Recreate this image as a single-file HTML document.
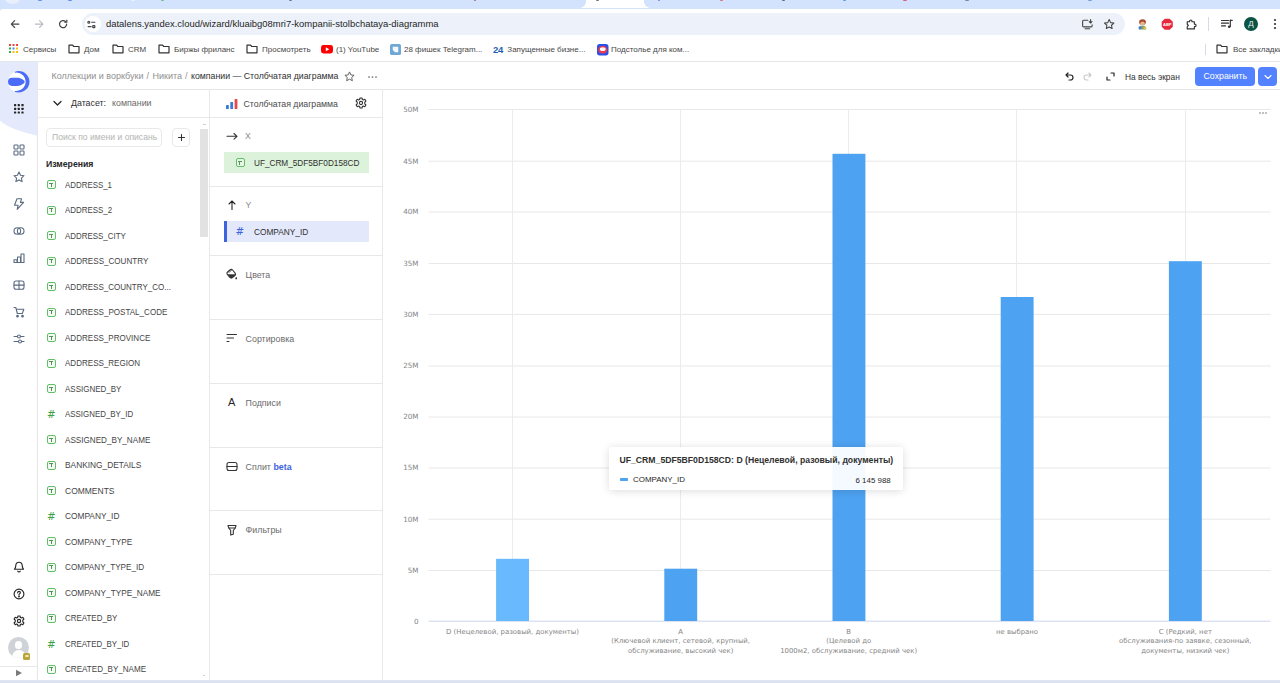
<!DOCTYPE html>
<html lang="ru">
<head>
<meta charset="utf-8">
<title>компании — Столбчатая диаграмма</title>
<style>
*{box-sizing:border-box;margin:0;padding:0}
html,body{width:1280px;height:683px;overflow:hidden;background:#fff}
body{font-family:"Liberation Sans",sans-serif;color:#262626;position:relative;font-size:8.7px;line-height:1}
.abs{position:absolute}
svg{display:block;overflow:visible}
/* browser chrome */
#tabs{left:0;top:0;width:1280px;height:14px;background:#d3e3fd}
#tabs .act{left:586px;top:0;width:58px;height:8px;background:#fff;border-radius:0}
#tabs .act:before,#tabs .act:after{content:"";position:absolute;bottom:0;width:6px;height:6px;background:radial-gradient(circle at 0 0,#d3e3fd 5.5px,#fff 6px)}
#tabs .act:before{left:-6px}
#tabs .act:after{right:-6px;background:radial-gradient(circle at 100% 0,#d3e3fd 5.5px,#fff 6px)}
#tb{left:0;top:8.500px;width:1280px;height:30.500px;background:#fff;border-radius:3px 0 0 0}
#pill{left:82px;top:13px;width:1043px;height:22px;border-radius:11px;background:#edf2fa}
#pill .ic{left:3px;top:3px;width:16px;height:16px;border-radius:8px;background:#fff}
#url{left:106px;top:13px;height:22px;line-height:22px;font-size:9.45px;color:#1f1f1f;white-space:nowrap}
#bm{left:0;top:39px;width:1280px;height:23px;background:#fff;border-bottom:1px solid #e4e6ea}
.bmi{top:39px;height:21px;line-height:21px;font-size:8px;color:#474747;white-space:nowrap}

/* app */
#aside{left:0;top:62px;width:38px;height:618px;background:#fff;border-right:1px solid #e6e6e6}
.ai{left:13px;width:12px;height:12px}
#hdr{left:38px;top:62px;width:1242px;height:28px;border-bottom:1px solid #e5e5e5;background:#fff}
.bc{top:62px;height:28px;line-height:28px;color:#8f8f8f;white-space:nowrap}
.vline{width:1px;background:#e8e8e8}
.hline{height:1px;background:#e8e8e8}
.t{white-space:nowrap;line-height:12px;height:12px}
.fld{left:64.800px;font-size:8.7px;color:#454545;transform:scaleX(.932);transform-origin:0 50%}
.ti{left:46.800px;width:9px;height:9px;border:1.100px solid #62bf66;border-radius:2px;background:#f4fbf4}
.ti:before{content:"";position:absolute;left:1.700px;top:1.600px;width:3.400px;height:1px;background:#5c8f60}
.ti:after{content:"";position:absolute;left:2.900px;top:2px;width:1px;height:3.400px;background:#5c8f60}
.hash{left:47px;font-family:"DejaVu Sans","Liberation Sans",sans-serif;font-size:10.300px;color:#3fa045;font-weight:400;line-height:12px;height:12px}
.sec{left:245.600px;font-size:8.850px;color:#6b6b6b}
.glab{font-family:"DejaVu Sans","Liberation Sans",sans-serif;font-size:7.200px;color:#858585;white-space:nowrap;line-height:10px;height:10px;text-align:right;width:30px;left:388.500px}
.xlab{font-family:"DejaVu Sans","Liberation Sans",sans-serif;font-size:6.920px;color:#858585;white-space:nowrap;line-height:9.700px;text-align:center;width:168px;top:627.500px}
.bar{background:#4da2f1;width:32.900px}
</style>
</head>
<body>
<!-- ===== browser chrome ===== -->
<div id="tabs" class="abs"><div class="act abs"></div></div>
<div id="tb" class="abs"></div>
<div class="abs" style="left:5px;top:-8px;width:15px;height:12px;background:#e9f0fc;border-radius:50%;z-index:2"></div><div class="abs" style="left:38.0px;top:0;width:4px;height:1.200px;opacity:.75;background:#3b78e0;border-radius:0 0 1px 1px;z-index:2"></div><div class="abs" style="left:68.0px;top:0;width:4px;height:1.200px;opacity:.75;background:#3b78e0;border-radius:0 0 1px 1px;z-index:2"></div><div class="abs" style="left:131.0px;top:0;width:4px;height:1.200px;opacity:.75;background:#f4f6fb;border-radius:0 0 1px 1px;z-index:2"></div><div class="abs" style="left:160.5px;top:0;width:3px;height:1.200px;opacity:.75;background:#5aa85a;border-radius:0 0 1px 1px;z-index:2"></div><div class="abs" style="left:288.5px;top:0;width:3px;height:1.200px;opacity:.75;background:#555;border-radius:0 0 1px 1px;z-index:2"></div><div class="abs" style="left:474.0px;top:0;width:2px;height:1.200px;opacity:.75;background:#8a3a3a;border-radius:0 0 1px 1px;z-index:2"></div><div class="abs" style="left:595.5px;top:0;width:3px;height:1.200px;opacity:.75;background:#444;border-radius:0 0 1px 1px;z-index:2"></div><div class="abs" style="left:658.0px;top:0;width:2px;height:1.200px;opacity:.75;background:#3b5fd0;border-radius:0 0 1px 1px;z-index:2"></div><div class="abs" style="left:719.5px;top:0;width:3px;height:1.200px;opacity:.75;background:#d84a4a;border-radius:0 0 1px 1px;z-index:2"></div><div class="abs" style="left:781.5px;top:0;width:3px;height:1.200px;opacity:.75;background:#444;border-radius:0 0 1px 1px;z-index:2"></div><div class="abs" style="left:842.5px;top:0;width:3px;height:1.200px;opacity:.75;background:#3b78e0;border-radius:0 0 1px 1px;z-index:2"></div><div class="abs" style="left:903.0px;top:0;width:4px;height:1.200px;opacity:.75;background:#d8385a;border-radius:0 0 1px 1px;z-index:2"></div><div class="abs" style="left:965.0px;top:0;width:4px;height:1.200px;opacity:.75;background:#667;border-radius:0 0 1px 1px;z-index:2"></div><div class="abs" style="left:1088.0px;top:0;width:4px;height:1.200px;opacity:.75;background:#5a8ac0;border-radius:0 0 1px 1px;z-index:2"></div>
<div id="pill" class="abs"><div class="ic abs"></div></div>
<div id="url" class="abs">datalens.yandex.cloud/wizard/kluaibg08mri7-kompanii-stolbchataya-diagramma</div>
<div id="bm" class="abs"></div>
<!-- toolbar icons -->
<svg class="abs" style="left:9.700px;top:19.300px" width="10.200" height="10.200" viewBox="0 0 12 12" fill="none" stroke="#444" stroke-width="1.3" stroke-linecap="round" stroke-linejoin="round"><path d="M10.5 6h-9M5.5 2 1.5 6l4 4"/></svg>
<svg class="abs" style="left:33.800px;top:19.300px" width="10.200" height="10.200" viewBox="0 0 12 12" fill="none" stroke="#b9bcc2" stroke-width="1.3" stroke-linecap="round" stroke-linejoin="round"><path d="M1.5 6h9M6.5 2l4 4-4 4"/></svg>
<svg class="abs" style="left:58px;top:19.200px" width="10.200" height="10.200" viewBox="0 0 12 12" fill="none" stroke="#444" stroke-width="1.4" stroke-linecap="round"><path d="M10.2 6a4.2 4.2 0 1 1-1.3-3"/><path d="M10.4 1.4v2.4H8" stroke-linejoin="round"/></svg>
<svg class="abs" style="left:87.300px;top:19.800px" width="9" height="9" viewBox="0 0 10 10" fill="none" stroke="#444" stroke-width="1.3" stroke-linecap="round"><circle cx="2" cy="2.5" r="1.1"/><path d="M5.2 2.5h3.6M1.2 7.3h3.4"/><rect x="6.4" y="6.2" width="2.3" height="2.3" rx=".5"/></svg>
<!-- right side icons -->
<svg class="abs" style="left:1080.500px;top:17.800px" width="12.800" height="12.800" viewBox="0 0 14 14" fill="none" stroke="#444" stroke-width="1.2" stroke-linecap="round" stroke-linejoin="round"><path d="M7.5 2.5H2.8a1 1 0 0 0-1 1v5.2a1 1 0 0 0 1 1h8.4a1 1 0 0 0 1-1V7.5M4.5 11.8h5M10.5 1.8v3.6M9 4l1.5 1.5L12 4"/></svg>
<svg class="abs" style="left:1102.600px;top:18px" width="12.400" height="12.400" viewBox="0 0 14 14" fill="none" stroke="#444" stroke-width="1.2" stroke-linejoin="round"><path d="M7 1.8l1.6 3.4 3.7.5-2.7 2.5.7 3.7L7 10.1l-3.3 1.8.7-3.7L1.7 5.7l3.7-.5z"/></svg>
<svg class="abs" style="left:1136px;top:18px" width="12.500" height="12.500" viewBox="0 0 14 14"><ellipse cx="7.3" cy="4.6" rx="3.8" ry="3.2" fill="#a8482e"/><ellipse cx="7.3" cy="6" rx="2.4" ry="2.2" fill="#e8b48a"/><path d="M3.2 13c0-3 1.6-4.6 4.1-4.6s4.1 1.600 4.100 4.600z" fill="#7fa66c"/><rect x="3" y="9.500" width="3" height="3" fill="#4a78c8"/><rect x="8.500" y="10" width="3" height="2.500" fill="#d9c04a"/></svg>
<svg class="abs" style="left:1160.500px;top:17.800px" width="12.500" height="12.500" viewBox="0 0 14 14"><path d="M4.3.8h5.400l3.500 3.500v5.400l-3.500 3.500H4.300L.8 9.700V4.300z" fill="#e8283c"/><text x="7" y="8.700" font-family="Liberation Sans,sans-serif" font-size="4.600" font-weight="700" fill="#fff" text-anchor="middle">ABP</text></svg>
<svg class="abs" style="left:1184.500px;top:17.800px" width="12.500" height="12.500" viewBox="0 0 14 14" fill="none" stroke="#333" stroke-width="1.300" stroke-linejoin="round"><path d="M2.500 4.200h2.700v-.7a1.300 1.300 0 0 1 2.600 0v.7h2.700v2.700h.5a1.400 1.400 0 0 1 0 2.800h-.5v2.500H2.500V9.600L3.800 8.300 2.500 7z"/></svg>
<div class="abs" style="left:1208px;top:17px;width:1px;height:14px;background:#d5dbe6"></div>
<svg class="abs" style="left:1220px;top:18px" width="13" height="12" viewBox="0 0 13 12" fill="none" stroke="#333" stroke-width="1.200" stroke-linecap="round"><path d="M1.500 2.500h7M1.500 5.200h7M1.500 7.900h4"/><path d="M10.300 2v6.300" /><path d="M10.300 2.300h2"/><circle cx="9.200" cy="8.800" r="1.300" fill="#333" stroke="none"/></svg>
<div class="abs" style="left:1244px;top:17px;width:14px;height:14px;border-radius:7px;background:#0b5345;color:#e8f0ee;font-size:8px;line-height:14px;text-align:center;font-weight:400">Д</div>
<svg class="abs" style="left:1273px;top:18px" width="4" height="12" viewBox="0 0 4 12" fill="#333"><circle cx="2" cy="2" r="1.100"/><circle cx="2" cy="6" r="1.100"/><circle cx="2" cy="10" r="1.100"/></svg>
<!-- bookmarks -->
<svg class="abs" style="left:8.500px;top:44.300px" width="9" height="9" viewBox="0 0 10 10"><g><rect x="0" y="0" width="2.200" height="2.200" fill="#ea4335"/><rect x="3.900" y="0" width="2.200" height="2.200" fill="#ea4335"/><rect x="7.800" y="0" width="2.200" height="2.200" fill="#ea4335"/><rect x="0" y="3.900" width="2.200" height="2.200" fill="#34a853"/><rect x="3.900" y="3.900" width="2.200" height="2.200" fill="#4285f4"/><rect x="7.800" y="3.900" width="2.200" height="2.200" fill="#fbbc05"/><rect x="0" y="7.800" width="2.200" height="2.200" fill="#34a853"/><rect x="3.900" y="7.800" width="2.200" height="2.200" fill="#fbbc05"/><rect x="7.800" y="7.800" width="2.200" height="2.200" fill="#fbbc05"/></g></svg>
<div class="bmi abs" style="left:23px">Сервисы</div>
<svg class="abs fold" style="left:68px;top:44px" width="12" height="10" viewBox="0 0 12 10" fill="none" stroke="#333" stroke-width="1.200" stroke-linejoin="round"><path d="M1 1.200h3.600l1.200 1.300H11v6.300H1z"/></svg>
<div class="bmi abs" style="left:84px">Дом</div>
<svg class="abs fold" style="left:112px;top:44px" width="12" height="10" viewBox="0 0 12 10" fill="none" stroke="#333" stroke-width="1.200" stroke-linejoin="round"><path d="M1 1.200h3.600l1.200 1.300H11v6.300H1z"/></svg>
<div class="bmi abs" style="left:128px">CRM</div>
<svg class="abs fold" style="left:158px;top:44px" width="12" height="10" viewBox="0 0 12 10" fill="none" stroke="#333" stroke-width="1.200" stroke-linejoin="round"><path d="M1 1.200h3.600l1.200 1.300H11v6.300H1z"/></svg>
<div class="bmi abs" style="left:174px">Биржы фриланс</div>
<svg class="abs fold" style="left:246px;top:44px" width="12" height="10" viewBox="0 0 12 10" fill="none" stroke="#333" stroke-width="1.200" stroke-linejoin="round"><path d="M1 1.200h3.600l1.200 1.300H11v6.300H1z"/></svg>
<div class="bmi abs" style="left:262px">Просмотреть</div>
<svg class="abs" style="left:321px;top:45px" width="12" height="9" viewBox="0 0 12 9"><rect width="12" height="8.500" rx="2.400" fill="#f00"/><path d="M4.800 2.300v4l3.500-2z" fill="#fff"/></svg>
<div class="bmi abs" style="left:336px">(1) YouTube</div>
<svg class="abs" style="left:389.500px;top:43.500px" width="11" height="11" viewBox="0 0 12 12"><rect width="12" height="12" rx="2" fill="#6fa8d6"/><path d="M3 3h6v6H5.500L3 6.500z" fill="#f4f8fc"/></svg>
<div class="bmi abs" style="left:404px">28 фишек Telegram...</div>
<div class="bmi abs" style="left:493px;font-size:9.500px;font-weight:700;color:#1a5fb4;letter-spacing:-.3px">24</div>
<div class="bmi abs" style="left:507.300px">Запущенные бизне...</div>
<svg class="abs" style="left:597px;top:43.500px" width="11.500" height="11.500" viewBox="0 0 12 12"><rect width="12" height="12" rx="2.800" fill="#2b50e8"/><ellipse cx="6" cy="6" rx="4.600" ry="3.800" fill="#f03a4a"/><ellipse cx="6" cy="5.400" rx="3" ry="1.900" fill="#fff"/></svg>
<div class="bmi abs" style="left:611px">Подстолье для ком...</div>
<div class="abs" style="left:1205px;top:44px;width:1px;height:11px;background:#d5dbe6"></div>
<svg class="abs fold" style="left:1216px;top:44px" width="12" height="10" viewBox="0 0 12 10" fill="none" stroke="#333" stroke-width="1.200" stroke-linejoin="round"><path d="M1 1.200h3.600l1.200 1.300H11v6.300H1z"/></svg>
<div class="bmi abs" style="left:1233px">Все закладки</div>
<!--BM-->
<!-- ===== app ===== -->
<div id="aside" class="abs"></div>
<svg class="abs" style="left:0;top:62px" width="38" height="76" viewBox="0 0 38 76"><path d="M0 0H37.500V73.800C22 70 8 66 0 58.500z" fill="#e4e9fb"/></svg>
<svg class="abs" style="left:8px;top:71px" width="22" height="22" viewBox="0 0 22 22"><defs><clipPath id="lc"><rect x="6.800" y="-1" width="16" height="24"/></clipPath></defs><circle cx="10.800" cy="10.800" r="10.700" fill="#fff"/><path clip-path="url(#lc)" fill-rule="evenodd" fill="#4a6cf7" d="M10.800 .1a10.700 10.700 0 0 1 0 21.400a10.700 10.700 0 0 1 0-21.400z M8.500 1.600a9.200 9.200 0 0 1 0 18.400a9.200 9.200 0 0 1 0-18.400z"/><path d="M4.100 6.700h5.400c3.400 0 7.300 2.600 7.300 4.100s-3.900 4.100-7.300 4.100H4.100a4.100 4.100 0 0 1 0-8.200z" fill="#4a6cf7"/></svg>
<svg class="abs" style="left:14px;top:104px" width="10" height="10" viewBox="0 0 10 10" fill="#262626"><rect x="0" y="0" width="2.200" height="2.200" rx=".5"/><rect x="3.7" y="0" width="2.200" height="2.200" rx=".5"/><rect x="7.4" y="0" width="2.200" height="2.200" rx=".5"/><rect x="0" y="3.7" width="2.200" height="2.200" rx=".5"/><rect x="3.7" y="3.7" width="2.200" height="2.200" rx=".5"/><rect x="7.4" y="3.7" width="2.200" height="2.200" rx=".5"/><rect x="0" y="7.4" width="2.200" height="2.200" rx=".5"/><rect x="3.7" y="7.4" width="2.200" height="2.200" rx=".5"/><rect x="7.4" y="7.4" width="2.200" height="2.200" rx=".5"/></svg>
<svg class="ai abs" style="top:144px" viewBox="0 0 12 12" fill="none" stroke="#5b6b82" stroke-width="1.100" stroke-linecap="round" stroke-linejoin="round"><rect x="1" y="1" width="4" height="4" rx=".700"/><rect x="7" y="1" width="4" height="4" rx=".700"/><rect x="1" y="7" width="4" height="4" rx=".700"/><rect x="7" y="7" width="4" height="4" rx=".700"/></svg>
<svg class="ai abs" style="top:171px" viewBox="0 0 12 12" fill="none" stroke="#5b6b82" stroke-width="1.100" stroke-linecap="round" stroke-linejoin="round"><path d="M6 1l1.500 3.300 3.500.4-2.600 2.400.7 3.500L6 8.900 2.900 10.600l.7-3.500L1 4.700l3.500-.4z"/></svg>
<svg class="ai abs" style="top:197.5px" viewBox="0 0 12 12" fill="none" stroke="#5b6b82" stroke-width="1.100" stroke-linecap="round" stroke-linejoin="round"><path d="M4 .8h4.600L7.400 4.400h3.200L4.200 11.300l.9-4.100H1.500z"/></svg>
<svg class="ai abs" style="top:225px" viewBox="0 0 12 12" fill="none" stroke="#5b6b82" stroke-width="1.100" stroke-linecap="round" stroke-linejoin="round"><circle cx="4.300" cy="6" r="3.300"/><circle cx="7.700" cy="6" r="3.300"/></svg>
<svg class="ai abs" style="top:251.5px" viewBox="0 0 12 12" fill="none" stroke="#5b6b82" stroke-width="1.100" stroke-linecap="round" stroke-linejoin="round"><path d="M1 7.800h3v2.700H1zM4.500 5h3v5.500h-3zM8 2h3v8.500H8z"/></svg>
<svg class="ai abs" style="top:278.5px" viewBox="0 0 12 12" fill="none" stroke="#5b6b82" stroke-width="1.100" stroke-linecap="round" stroke-linejoin="round"><rect x="1" y="2" width="10" height="8.200" rx="2"/><path d="M1 6.100h10M6 2v8.200"/></svg>
<svg class="ai abs" style="top:305.5px" viewBox="0 0 12 12" fill="none" stroke="#5b6b82" stroke-width="1.100" stroke-linecap="round" stroke-linejoin="round"><path d="M1 1.500h1.800l1.500 6h5l1.500-4.200H4"/><circle cx="4.500" cy="10.200" r=".8" fill="#5b6b82"/><circle cx="9.500" cy="10.200" r=".8" fill="#5b6b82"/></svg>
<svg class="ai abs" style="top:332.5px" viewBox="0 0 12 12" fill="none" stroke="#5b6b82" stroke-width="1.100" stroke-linecap="round" stroke-linejoin="round"><path d="M1 3.500h3.500M7.500 3.500H11M1 8.500h4.500M8.500 8.500H11"/><circle cx="6" cy="3.500" r="1.500"/><circle cx="7" cy="8.500" r="1.500"/></svg>
<svg class="ai abs" style="top:561px" viewBox="0 0 12 12" fill="none" stroke="#262626" stroke-width="1.150" stroke-linecap="round" stroke-linejoin="round"><path d="M6 1.200c-2 0-3.200 1.500-3.200 3.300 0 2-.5 2.800-1.300 3.700h9c-.8-.9-1.300-1.700-1.300-3.700C9.200 2.700 8 1.200 6 1.200zM4.800 10.200c.3.500.7.700 1.200.7s.9-.2 1.200-.7"/></svg>
<svg class="ai abs" style="top:588px" viewBox="0 0 12 12" fill="none" stroke="#262626" stroke-width="1.150" stroke-linecap="round" stroke-linejoin="round"><circle cx="6" cy="6" r="4.900"/><path d="M4.600 4.800c0-.8.600-1.400 1.400-1.400s1.400.6 1.400 1.300c0 .9-1.400 1-1.400 2.100"/><circle cx="6" cy="8.500" r=".4" fill="#262626"/></svg>
<svg class="ai abs" style="top:614.5px" viewBox="0 0 12 12" fill="none" stroke="#262626" stroke-width="1.150" stroke-linecap="round" stroke-linejoin="round"><path d="M5 1h2l.4 1.500 1 .5 1.400-.7 1.100 1.700-1.100 1.100v1.800l1.100 1.100-1.100 1.700-1.400-.7-1 .5L7 11H5l-.4-1.500-1-.5-1.400.7L1.100 8l1.100-1.100V5.100L1.100 4l1.100-1.700 1.400.7 1-.5z"/><circle cx="6" cy="6" r="1.600"/></svg>
<div class="abs" style="left:8px;top:637px;width:21px;height:21px;border-radius:11px;background:#cfd2d6;overflow:hidden"><div class="abs" style="left:7px;top:4px;width:7px;height:8px;border-radius:4px;background:#fff"></div><div class="abs" style="left:3.500px;top:12.500px;width:14px;height:12px;border-radius:7px 7px 0 0;background:#fff"></div></div>
<div class="abs" style="left:23px;top:652.500px;width:7px;height:7px;border-radius:1.500px;background:#b8a63d"><div class="abs" style="left:1.500px;top:2.300px;width:4px;height:2.500px;border:0.800px solid #f3edb5;border-radius:1px"></div></div>
<div class="hline abs" style="left:0;top:666px;width:38px"></div>
<svg class="abs" style="left:15px;top:669px" width="8" height="8" viewBox="0 0 8 8"><path d="M1 .8 7 4 1 7.200z" fill="#7b7b7b"/></svg>
<div id="hdr" class="abs"></div>
<div class="bc abs" style="left:51.500px;font-size:9px">Коллекции и воркбуки</div><div class="bc abs" style="left:146.500px;font-size:9px">/</div><div class="bc abs" style="left:152.600px;font-size:9px">Никита</div><div class="bc abs" style="left:185px;font-size:9px">/</div><div class="bc abs" style="left:191px;font-size:8.770px;color:#303030">компании — Столбчатая диаграмма</div>
<svg class="abs" style="left:343.500px;top:70.500px" width="11" height="11" viewBox="0 0 12 12" fill="none" stroke="#555" stroke-width="1" stroke-linejoin="round"><path d="M6 1l1.500 3.300 3.500.4-2.600 2.400.7 3.500L6 8.900 2.900 10.600l.7-3.500L1 4.700l3.500-.4z"/></svg>
<svg class="abs" style="left:367.500px;top:75.500px" width="9" height="2" viewBox="0 0 9 2" fill="#666"><circle cx="1" cy="1" r=".85"/><circle cx="4.500" cy="1" r=".85"/><circle cx="8" cy="1" r=".85"/></svg>
<svg class="abs" style="left:1064.500px;top:72px" width="9" height="9" viewBox="0 0 9 9" fill="none" stroke="#262626" stroke-width="1.200" stroke-linecap="round" stroke-linejoin="round"><path d="M1 3h4.500a2.500 2.500 0 0 1 0 5H4M3 1 1 3l2 2"/></svg>
<svg class="abs" style="left:1082.500px;top:72px" width="9" height="9" viewBox="0 0 9 9" fill="none" stroke="#c9c9c9" stroke-width="1.100" stroke-linecap="round" stroke-linejoin="round"><path d="M8 3H3.500a2.500 2.500 0 0 0 0 5H5M6 1l2 2-2 2"/></svg>
<svg class="abs" style="left:1106px;top:72px" width="9" height="9" viewBox="0 0 9 9" fill="none" stroke="#262626" stroke-width="1.200" stroke-linecap="round" stroke-linejoin="round"><path d="M5 1h3v3M4 8H1V5"/></svg>
<div class="t abs" style="left:1125px;top:70.500px;font-size:8.400px;color:#303030">На весь экран</div>
<div class="abs" style="left:1195.400px;top:67.200px;width:59.800px;height:18.800px;border-radius:4px;background:#5282ff;color:#fff;font-size:8.750px;line-height:18.800px;text-align:center">Сохранить</div>
<div class="abs" style="left:1258px;top:67.200px;width:18.700px;height:18.800px;border-radius:4px;background:#5282ff"><svg class="abs" style="left:5.500px;top:6.500px" width="8" height="6" viewBox="0 0 8 6" fill="none" stroke="#fff" stroke-width="1.100" stroke-linecap="round" stroke-linejoin="round"><path d="M1 1.500 4 4.500 7 1.500"/></svg></div>
<div class="hline abs" style="left:38px;top:117px;width:344px"></div>
<svg class="abs" style="left:53px;top:99.500px" width="9" height="7" viewBox="0 0 9 7" fill="none" stroke="#262626" stroke-width="1.300" stroke-linecap="round" stroke-linejoin="round"><path d="M1 1.500 4.500 5 8 1.500"/></svg>
<div class="t abs" style="left:71px;top:96.700px;font-size:8.800px;color:#303030">Датасет:</div>
<div class="t abs" style="left:112px;top:96.700px;font-size:8.900px;color:#6b6b6b">компании</div>
<div class="abs" style="left:46px;top:128px;width:116px;height:19px;border:1px solid #e9e9e9;border-radius:4px;font-size:8.600px;line-height:17px;color:#b4b4b4;padding-left:5px;white-space:nowrap;overflow:hidden">Поиск по имени и описань</div>
<div class="abs" style="left:172px;top:128px;width:18px;height:19px;border:1px solid #e9e9e9;border-radius:4px"><svg class="abs" style="left:4.500px;top:5px" width="7" height="7" viewBox="0 0 7 7" stroke="#333" stroke-width="1.100" stroke-linecap="round"><path d="M3.500 .5v6M.5 3.500h6"/></svg></div>
<div class="abs" style="left:200px;top:129px;width:8px;height:107.500px;background:#e2e2e2"></div>
<div class="abs" style="left:202.500px;top:123.500px;width:3px;height:1px;background:#d0d0d0"></div>
<div class="abs" style="left:203px;top:674.500px;width:2px;height:1px;background:#d0d0d0"></div>
<div class="t abs" style="left:46px;top:157.500px;font-size:8.700px;font-weight:700;color:#262626">Измерения</div>
<div class="ti abs" style="top:180.3px"></div>
<div class="t fld abs" style="top:178.8px;transform:scaleX(0.909)">ADDRESS_1</div>
<div class="ti abs" style="top:205.8px"></div>
<div class="t fld abs" style="top:204.3px;transform:scaleX(0.913)">ADDRESS_2</div>
<div class="ti abs" style="top:231.3px"></div>
<div class="t fld abs" style="top:229.8px;transform:scaleX(0.913)">ADDRESS_CITY</div>
<div class="ti abs" style="top:256.8px"></div>
<div class="t fld abs" style="top:255.3px;transform:scaleX(0.929)">ADDRESS_COUNTRY</div>
<div class="ti abs" style="top:282.3px"></div>
<div class="t fld abs" style="top:280.8px;transform:scaleX(0.923)">ADDRESS_COUNTRY_CO...</div>
<div class="ti abs" style="top:307.8px"></div>
<div class="t fld abs" style="top:306.3px;transform:scaleX(0.927)">ADDRESS_POSTAL_CODE</div>
<div class="ti abs" style="top:333.3px"></div>
<div class="t fld abs" style="top:331.8px;transform:scaleX(0.925)">ADDRESS_PROVINCE</div>
<div class="ti abs" style="top:358.8px"></div>
<div class="t fld abs" style="top:357.3px;transform:scaleX(0.925)">ADDRESS_REGION</div>
<div class="ti abs" style="top:384.3px"></div>
<div class="t fld abs" style="top:382.8px;transform:scaleX(0.918)">ASSIGNED_BY</div>
<div class="hash abs" style="top:408.0px">#</div>
<div class="t fld abs" style="top:408.3px;transform:scaleX(0.911)">ASSIGNED_BY_ID</div>
<div class="ti abs" style="top:435.4px"></div>
<div class="t fld abs" style="top:433.9px;transform:scaleX(0.935)">ASSIGNED_BY_NAME</div>
<div class="ti abs" style="top:460.9px"></div>
<div class="t fld abs" style="top:459.4px;transform:scaleX(0.960)">BANKING_DETAILS</div>
<div class="ti abs" style="top:486.4px"></div>
<div class="t fld abs" style="top:484.9px;transform:scaleX(0.977)">COMMENTS</div>
<div class="hash abs" style="top:510.1px">#</div>
<div class="t fld abs" style="top:510.4px;transform:scaleX(0.958)">COMPANY_ID</div>
<div class="ti abs" style="top:537.4px"></div>
<div class="t fld abs" style="top:535.9px;transform:scaleX(0.949)">COMPANY_TYPE</div>
<div class="ti abs" style="top:562.9px"></div>
<div class="t fld abs" style="top:561.4px;transform:scaleX(0.939)">COMPANY_TYPE_ID</div>
<div class="ti abs" style="top:588.4px"></div>
<div class="t fld abs" style="top:586.9px;transform:scaleX(0.949)">COMPANY_TYPE_NAME</div>
<div class="ti abs" style="top:613.9px"></div>
<div class="t fld abs" style="top:612.4px;transform:scaleX(0.915)">CREATED_BY</div>
<div class="hash abs" style="top:637.6px">#</div>
<div class="t fld abs" style="top:637.9px;transform:scaleX(0.908)">CREATED_BY_ID</div>
<div class="ti abs" style="top:664.9px"></div>
<div class="t fld abs" style="top:663.4px;transform:scaleX(0.930)">CREATED_BY_NAME</div>
<div class="vline abs" style="left:209px;top:90px;width:1px;height:590px"></div>
<div class="vline abs" style="left:382px;top:90px;width:1px;height:590px"></div>
<svg class="abs" style="left:226px;top:98.500px" width="12" height="10" viewBox="0 0 12 10"><rect x="0" y="6" width="2.800" height="4" rx=".5" fill="#3a7bd5"/><rect x="4.300" y="3" width="2.800" height="7" rx=".5" fill="#3a7bd5"/><rect x="8.600" y="0" width="2.800" height="10" rx=".5" fill="#e84a4a"/></svg>
<div class="t abs" style="left:243.500px;top:97.500px;font-size:8.740px;color:#4a4a4a">Столбчатая диаграмма</div>
<svg class="abs" style="left:355px;top:97.400px" width="12" height="12" viewBox="0 0 12 12" fill="none" stroke="#333" stroke-width="1.100" stroke-linejoin="round"><path d="M5 1h2l.4 1.500 1 .5 1.400-.7 1.100 1.700-1.100 1.100v1.800l1.100 1.100-1.100 1.700-1.400-.7-1 .5L7 11H5l-.4-1.500-1-.5-1.400.7L1.100 8l1.100-1.100V5.100L1.100 4l1.100-1.700 1.400.7 1-.5z"/><circle cx="6" cy="6" r="1.600"/></svg>
<div class="hline abs" style="left:210px;top:186.4px;width:172px"></div>
<div class="hline abs" style="left:210px;top:255px;width:172px"></div>
<div class="hline abs" style="left:210px;top:318.9px;width:172px"></div>
<div class="hline abs" style="left:210px;top:382.8px;width:172px"></div>
<div class="hline abs" style="left:210px;top:446.6px;width:172px"></div>
<div class="hline abs" style="left:210px;top:510.4px;width:172px"></div>
<div class="hline abs" style="left:210px;top:574.3px;width:172px"></div>
<svg class="abs" style="left:226px;top:132px" width="12" height="8" viewBox="0 0 12 8" fill="none" stroke="#333" stroke-width="1.100" stroke-linecap="round" stroke-linejoin="round"><path d="M1 4.300h10M8 1.500 11 4.300 8 7.100"/></svg>
<div class="t abs" style="left:245px;top:129.900px;font-size:8.700px;color:#8a8a8a">X</div>
<div class="abs" style="left:224px;top:152px;width:144.500px;height:20.700px;background:#dcf2da"></div>
<div class="ti abs" style="left:235.500px;top:158.200px;background:rgba(255,255,255,.35)"></div>
<div class="t abs" style="left:253.500px;top:156.500px;font-size:8.700px;color:#303030;transform:scaleX(.945);transform-origin:0 50%">UF_CRM_5DF5BF0D158CD</div>
<svg class="abs" style="left:228px;top:199px" width="8" height="12" viewBox="0 0 8 12" fill="none" stroke="#262626" stroke-width="1.100" stroke-linecap="round" stroke-linejoin="round"><path d="M4 10.500V2M1 5 4 2l3 3"/></svg>
<div class="t abs" style="left:245.500px;top:199.300px;font-size:8.700px;color:#8a8a8a">Y</div>
<div class="abs" style="left:224px;top:221px;width:144.500px;height:21px;background:#e3e9fb;border-left:3px solid #3d63dd"></div>
<div class="hash abs" style="left:235.600px;top:225.300px;color:#3d63dd">#</div>
<div class="t abs" style="left:253.500px;top:225.500px;font-size:8.700px;color:#303030;transform:scaleX(.955);transform-origin:0 50%">COMPANY_ID</div>
<svg class="abs" style="left:225.500px;top:268.300px" width="12" height="12" viewBox="0 0 12 12" fill="none" stroke="#333" stroke-width="1.100" stroke-linecap="round" stroke-linejoin="round"><defs><clipPath id="bk"><rect x="1.900" y="2" width="6.800" height="7.400" rx="1.700" transform="rotate(-40 5.300 5.800)"/></clipPath></defs><rect x="0" y="6.300" width="12" height="6" fill="#333" stroke="none" clip-path="url(#bk)"/><rect x="1.900" y="2" width="6.800" height="7.400" rx="1.700" transform="rotate(-40 5.300 5.800)"/><path d="M3 4.500 5.500 2" stroke-width=".9"/><path d="M10.200 8.700c.5.700.9 1.200.9 1.700a.9.900 0 0 1-1.800 0c0-.5.400-1 .9-1.700z" fill="#333" stroke="none"/></svg>
<div class="t sec abs" style="top:268.800px">Цвета</div>
<svg class="abs" style="left:226px;top:333px" width="12" height="10" viewBox="0 0 12 10" fill="none" stroke="#333" stroke-width="1.100" stroke-linecap="round" stroke-linejoin="round"><path d="M1 1.500h9.500M1 5h6.500M1 8.500h2"/></svg>
<div class="t sec abs" style="top:332.800px">Сортировка</div>
<div class="t abs" style="left:228.100px;top:396.400px;font-size:11px;color:#262626;font-weight:400">A</div>
<div class="t sec abs" style="top:396.700px">Подписи</div>
<svg class="abs" style="left:226px;top:460.500px" width="12" height="11" viewBox="0 0 12 11" fill="none" stroke="#333" stroke-width="1.100" stroke-linecap="round" stroke-linejoin="round"><rect x="1" y="1.500" width="10" height="8" rx="2"/><path d="M1 5.500h10"/></svg>
<div class="t sec abs" style="top:460.600px">Сплит <b style="color:#3d63dd;font-weight:700">beta</b></div>
<svg class="abs" style="left:227px;top:524px" width="10" height="12" viewBox="0 0 10 12" fill="none" stroke="#333" stroke-width="1.100" stroke-linecap="round" stroke-linejoin="round"><path d="M1 1.500h8L8.200 4 6.300 6.500v3.800L3.700 11V6.500L1.800 4z"/><path d="M2 4h6"/></svg>
<div class="t sec abs" style="top:524.300px">Фильтры</div>
<svg class="abs" style="left:0;top:0" width="1280" height="683" viewBox="0 0 1280 683">
<line x1="428.500" x2="1270.500" y1="109.5" y2="109.5" stroke="#e8e8e8" stroke-width="1"/>
<line x1="428.500" x2="1270.500" y1="161.2" y2="161.2" stroke="#e8e8e8" stroke-width="1"/>
<line x1="428.500" x2="1270.500" y1="212.0" y2="212.0" stroke="#e8e8e8" stroke-width="1"/>
<line x1="428.500" x2="1270.500" y1="263.5" y2="263.5" stroke="#e8e8e8" stroke-width="1"/>
<line x1="428.500" x2="1270.500" y1="314.4" y2="314.4" stroke="#e8e8e8" stroke-width="1"/>
<line x1="428.500" x2="1270.500" y1="366.0" y2="366.0" stroke="#e8e8e8" stroke-width="1"/>
<line x1="428.500" x2="1270.500" y1="417.0" y2="417.0" stroke="#e8e8e8" stroke-width="1"/>
<line x1="428.500" x2="1270.500" y1="468.0" y2="468.0" stroke="#e8e8e8" stroke-width="1"/>
<line x1="428.500" x2="1270.500" y1="519.2" y2="519.2" stroke="#e8e8e8" stroke-width="1"/>
<line x1="428.500" x2="1270.500" y1="570.5" y2="570.5" stroke="#e8e8e8" stroke-width="1"/>
<line x1="428.500" x2="1270.500" y1="621.2" y2="621.2" stroke="#ccd6eb" stroke-width="1"/>
<line x1="512.5" x2="512.5" y1="109.500" y2="621" stroke="#ececec" stroke-width="1"/>
<line x1="680.5" x2="680.5" y1="109.500" y2="621" stroke="#ececec" stroke-width="1"/>
<line x1="848.5" x2="848.5" y1="109.500" y2="621" stroke="#ececec" stroke-width="1"/>
<line x1="1016.5" x2="1016.5" y1="109.500" y2="621" stroke="#ececec" stroke-width="1"/>
<line x1="1185.5" x2="1185.5" y1="109.500" y2="621" stroke="#ececec" stroke-width="1"/>
<rect x="496.10" y="558.8" width="32.900" height="62.2" fill="#68b9fd"/>
<rect x="664.30" y="568.7" width="32.900" height="52.3" fill="#4da2f1"/>
<rect x="832.50" y="153.8" width="32.900" height="467.2" fill="#4da2f1"/>
<rect x="1000.70" y="297" width="32.900" height="324.0" fill="#4da2f1"/>
<rect x="1168.90" y="261.2" width="32.900" height="359.8" fill="#4da2f1"/>
</svg>
<div class="glab abs" style="top:104.5px">50M</div>
<div class="glab abs" style="top:156.5px">45M</div>
<div class="glab abs" style="top:207.3px">40M</div>
<div class="glab abs" style="top:258.8px">35M</div>
<div class="glab abs" style="top:309.7px">30M</div>
<div class="glab abs" style="top:361.3px">25M</div>
<div class="glab abs" style="top:412.3px">20M</div>
<div class="glab abs" style="top:463.3px">15M</div>
<div class="glab abs" style="top:514.5px">10M</div>
<div class="glab abs" style="top:565.8px">5M</div>
<div class="glab abs" style="top:616.5px">0</div>
<div class="xlab abs" style="left:428.5px">D (Нецелевой, разовый, документы)</div>
<div class="xlab abs" style="left:596.7px">A<br>(Ключевой клиент, сетевой, крупный,<br>обслуживание, высокий чек)</div>
<div class="xlab abs" style="left:764.7px">B<br>(Целевой до<br>1000м2, обслуживание, средний чек)</div>
<div class="xlab abs" style="left:933.0px">не выбрано</div>
<div class="xlab abs" style="left:1101.3px">C (Редкий, нет<br>обслуживания-по заявке, сезонный,<br>документы, низкий чек)</div>
<svg class="abs" style="left:1258.500px;top:112px" width="8" height="2" viewBox="0 0 8 2" fill="#666"><circle cx="1" cy="1" r=".75"/><circle cx="4" cy="1" r=".75"/><circle cx="7" cy="1" r=".75"/></svg>
<div class="abs" style="left:608.600px;top:447px;width:294.400px;height:43.200px;background:rgba(255,255,255,.94);border-radius:3px;box-shadow:0 1px 8px rgba(0,0,0,.14)"></div>
<div class="t abs" style="left:619.500px;top:454px;font-size:8.670px;font-weight:700;color:#303030">UF_CRM_5DF5BF0D158CD: D (Нецелевой, разовый, документы)</div>
<div class="abs" style="left:619.500px;top:477.600px;width:8.200px;height:3.800px;background:#4da2f1;border-radius:.8px"></div>
<div class="t abs" style="left:633px;top:473.500px;font-size:7.950px;color:#262626">COMPANY_ID</div>
<div class="t abs" style="left:855.500px;top:474.700px;font-size:7.920px;color:#262626">6 145 988</div>
<div class="abs" style="left:0;top:680px;width:1280px;height:3px;background:linear-gradient(#e3e7f3,#d9dff0)"></div>
<!--APP-->
</body>
</html>
